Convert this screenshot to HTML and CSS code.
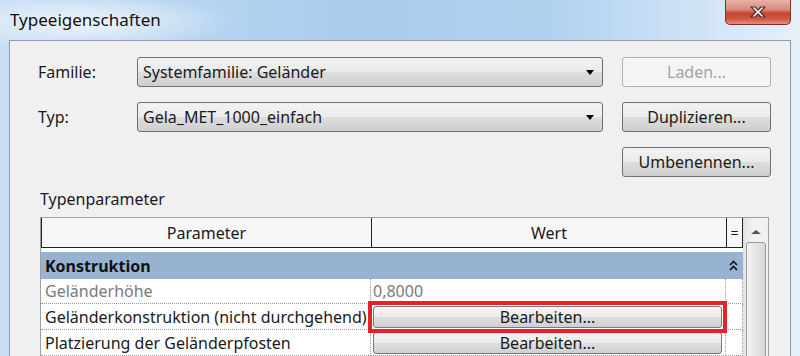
FILE: index.html
```html
<!DOCTYPE html>
<html lang="de">
<head>
    <meta charset="UTF-8">
    <title>Typeeigenschaften</title>
    <link rel="stylesheet" href="styles.css">
</head>
<body>

<div class="window">
    <div class="titlebar">
        <span class="title">Typeeigenschaften</span>
        <div class="close">
            <svg width="22" height="14" viewBox="0 0 22 14">
                <path d="M4 2 L8 2 L11 5 L14 2 L18 2 L13 7 L18 12 L14 12 L11 9 L8 12 L4 12 L9 7 Z" fill="#fff" stroke="#5a2a24" stroke-width="1.2" stroke-linejoin="round"/>
            </svg>
        </div>
    </div>

    <div class="client">
        <div class="type-grid">
            <label class="lbl">Familie:</label>
            <div class="combo">Systemfamilie: Geländer<span class="arrow"></span></div>
            <button class="btn" disabled>Laden...</button>

            <label class="lbl">Typ:</label>
            <div class="combo">Gela_MET_1000_einfach<span class="arrow"></span></div>
            <button class="btn">Duplizieren...</button>

            <span></span>
            <span></span>
            <button class="btn">Umbenennen...</button>
        </div>

        <div class="section-label">Typenparameter</div>

        <div class="table-wrap">
            <div class="props">
                <div class="head">Parameter</div>
                <div class="head">Wert</div>
                <div class="head eq">=</div>

                <div class="group-gap"></div>

                <div class="group">
                    <span>Konstruktion</span>
                    <svg class="chev" width="9" height="11" viewBox="0 0 9 11">
                        <path d="M1 5 L4.5 1.5 L8 5 M1 10 L4.5 6.5 L8 10" fill="none" stroke="#111" stroke-width="1.6"/>
                    </svg>
                </div>

                <div class="cell muted">Geländerhöhe</div>
                <div class="cell muted val">0,8000</div>
                <div class="cell last"></div>

                <div class="cell">Geländerkonstruktion (nicht durchgehend)</div>
                <div class="cell val"><span class="mark"><button class="edit">Bearbeiten...</button></span></div>
                <div class="cell last"></div>

                <div class="cell">Platzierung der Geländerpfosten</div>
                <div class="cell val"><button class="edit">Bearbeiten...</button></div>
                <div class="cell last"></div>
            </div>

            <div class="scrollbar">
                <div class="up"></div>
                <div class="thumb"></div>
            </div>
        </div>
    </div>
</div>

</body>
</html>
```

FILE: styles.css
```css
body {
    margin: 0;
    width: 800px;
    height: 356px;
    overflow: hidden;
    font-family: "Noto Sans", "Open Sans", sans-serif;
    font-size: 16px;
    color: #1a1a1a;
}

.window {
    height: 356px;
    overflow: hidden;
    background:
        radial-gradient(ellipse 150px 28px at 85px 22px, rgba(255, 255, 255, 0.75), rgba(255, 255, 255, 0) 100%),
        linear-gradient(to right, #c9def3 0%, #b9d6f1 20%, #a9ccec 45%, #b2d2ef 70%, #d8e8f8 92%, #e6f0fa 100%);
}

.titlebar {
    height: 40px;
    display: flex;
    align-items: flex-start;
}

.title {
    margin: 8px 0 0 10px;
    font-size: 17px;
    color: #111;
}

.close {
    margin: 0 9px 0 auto;
    width: 64px;
    height: 24px;
    border: 1px solid #7a3229;
    border-top: none;
    border-radius: 0 0 5px 5px;
    background: linear-gradient(to bottom, #e8b2a8 0%, #d98a7c 40%, #c6432f 55%, #d05a44 80%, #e0917f 100%);
    display: flex;
    justify-content: center;
    align-items: center;
}

.client {
    margin: 0 9px;
    height: 316px;
    background: #f0f0f0;
    border: 1px solid #8e9aa8;
    border-bottom: none;
    padding: 16px 0 0 28px;
    box-sizing: border-box;
    overflow: hidden;
}

.type-grid {
    display: grid;
    grid-template-columns: 80px 466px 149px;
    grid-template-rows: 30px 30px 30px;
    column-gap: 19px;
    row-gap: 15px;
    align-items: center;
}

.lbl {
    color: #1a1a1a;
}

.combo {
    height: 30px;
    box-sizing: border-box;
    border: 1px solid #707070;
    border-radius: 3px;
    background: linear-gradient(to bottom, #f2f2f2 0%, #ebebeb 50%, #dddddd 51%, #cfcfcf 100%);
    padding: 0 0 0 5px;
    display: flex;
    align-items: center;
}

.arrow {
    margin-left: auto;
    margin-right: 8px;
    width: 0;
    height: 0;
    border-left: 4.5px solid transparent;
    border-right: 4.5px solid transparent;
    border-top: 5px solid #000;
}

.btn {
    height: 30px;
    font-family: inherit;
    font-size: 16px;
    color: #1a1a1a;
    border: 1px solid #707070;
    border-radius: 3px;
    background: linear-gradient(to bottom, #f2f2f2 0%, #ebebeb 50%, #dddddd 51%, #cfcfcf 100%);
    padding: 0;
}

.btn:disabled {
    color: #a3a3a3;
    border-color: #adb2b5;
    background: #f4f4f4;
}

.section-label {
    margin: 13px 0 8px 2px;
    line-height: 19px;
}

.table-wrap {
    margin-left: 2px;
    width: 729px;
    height: 139px;
    box-sizing: border-box;
    border: 1px solid #a0a0a0;
    border-bottom: none;
    display: flex;
}

.props {
    width: 702px;
    display: grid;
    grid-template-columns: 330px 355px 17px;
    grid-template-rows: 30px 4px 27px 25px 26px 26px;
    background: #fff;
    align-content: start;
}

.head {
    background: #f7f7f7;
    border-left: 1px solid #222;
    border-bottom: 1px solid #222;
    display: flex;
    justify-content: center;
    align-items: center;
}

.head.eq {
    border-right: 1px solid #222;
    font-size: 14px;
}

.group-gap {
    grid-column: 1 / 4;
    background: #fff;
}

.group {
    grid-column: 1 / 4;
    background: #98b3d1;
    display: flex;
    align-items: center;
    padding: 0 5px 0 4px;
    font-weight: bold;
    color: #111;
}

.chev {
    margin-left: auto;
}

.cell {
    border-bottom: 1px dotted #9a9a9a;
    border-right: 1px dotted #9a9a9a;
    padding: 0 4px;
    display: flex;
    align-items: center;
    white-space: nowrap;
}

.cell.val {
    padding: 0 3px 0 2px;
}

.cell.last {
    padding: 0;
}

.muted {
    color: #7a7a7a;
}

.mark {
    position: relative;
    width: 100%;
    display: flex;
}

.mark::after {
    content: "";
    position: absolute;
    top: -5px;
    bottom: -5px;
    left: -5px;
    right: -5px;
    border: 4px solid #e3222b;
}

.edit {
    width: 100%;
    height: 22px;
    font-family: inherit;
    font-size: 16px;
    color: #1a1a1a;
    border: 1px solid #7a7a7a;
    border-radius: 3px;
    background: linear-gradient(to bottom, #f4f4f4 0%, #ececec 50%, #dedede 51%, #d0d0d0 100%);
    padding: 0;
    line-height: 18px;
}

.scrollbar {
    width: 25px;
    background: linear-gradient(to right, #e4e4e4, #f2f2f2 40%, #f0f0f0);
    border-left: 1px solid #e0e0e0;
    box-sizing: border-box;
}

.up {
    width: 0;
    height: 0;
    margin: 12px auto 8px;
    border-left: 5px solid transparent;
    border-right: 5px solid transparent;
    border-bottom: 4px solid #555;
}

.thumb {
    margin: 0 2px;
    height: 120px;
    border: 1px solid #9a9a9a;
    border-radius: 3px;
    background: linear-gradient(to right, #f2f2f2, #e6e6e6 50%, #d8d8d8);
}
```
